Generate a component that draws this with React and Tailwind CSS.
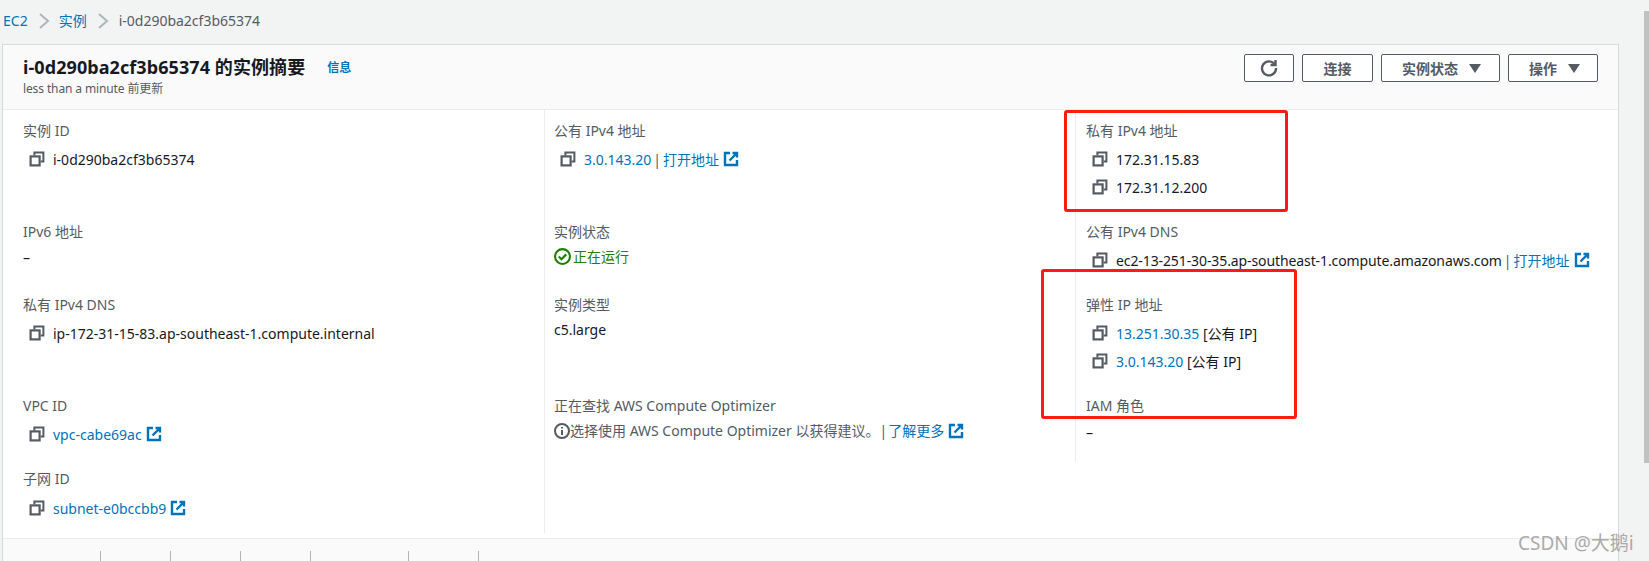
import React from "react";

const FONT = { fontFamily: '"Noto Sans", "Noto Sans CJK SC", sans-serif' };

// AWS style icons
function CopyIcon() {
  return (
    <svg width="16" height="16" viewBox="0 0 16 16" fill="none" stroke="#545b64" strokeWidth="2.2" className="shrink-0">
      <rect x="1.6" y="5.4" width="9" height="9" />
      <path d="M5.4 4.4V1.6h9v9h-2.8" strokeWidth="2" />
    </svg>
  );
}

function ExternalIcon() {
  return (
    <svg width="16" height="16" viewBox="0 0 16 16" fill="none" stroke="#0073bb" strokeWidth="2.4" className="shrink-0">
      <path d="M7 2H2v12h12V9" />
      <path d="M6.5 9.5L14 2M9.5 2h4.5v4.5" />
    </svg>
  );
}

function Chevron({ className }) {
  return (
    <svg width="14" height="18" viewBox="0 0 14 18" fill="none" stroke="#aab7b8" strokeWidth="2" className={className}>
      <path d="M3 2l8 7-8 7" />
    </svg>
  );
}

function Divider() {
  return <span className="text-[#545b64]">|</span>;
}

function Label({ children }) {
  return <div className="text-[#545b64] leading-5">{children}</div>;
}

function CopyRow({ children }) {
  return (
    <div className="flex items-center h-[28px] pl-[6px] gap-[8px] text-[#16191f]">
      <CopyIcon />
      <div className="flex items-center whitespace-nowrap">{children}</div>
    </div>
  );
}

function A({ children }) {
  return <span className="text-[#0073bb]">{children}</span>;
}

function HeadButton({ className, children }) {
  return (
    <div className={`h-[28px] flex items-center justify-center border border-[#545b64] rounded-[2px] bg-white text-[#545b64] font-bold text-[14px] ${className}`}>
      {children}
    </div>
  );
}

function Caret() {
  return <span className="w-0 h-0 border-x-[6px] border-x-transparent border-t-[9px] border-t-[#545b64]" />;
}

export default function App() {
  return (
    <div style={FONT} className="relative w-[1649px] h-[561px] overflow-hidden bg-[#f2f3f3] text-[14px]">
      {/* breadcrumb */}
      <div className="h-[44px] flex items-center pl-[3px] pb-[3px] text-[#545b64]">
        <span className="text-[#0073bb]">EC2</span>
        <Chevron className="ml-[9px] mr-[8px]" />
        <span className="text-[#0073bb]">实例</span>
        <Chevron className="ml-[9px] mr-[9px]" />
        <span>i-0d290ba2cf3b65374</span>
      </div>

      {/* card */}
      <div className="ml-[2px] w-[1617px] h-[517px] bg-white border-x border-t border-[#d5dbdb] flex flex-col">
        <div className="h-[65px] shrink-0 bg-[#fafafa] border-b border-[#eaeded] flex justify-between pl-[20px] pr-[20px] pt-[9px]">
          <div>
            <div className="flex items-center h-[27px]">
              <span className="font-bold text-[18px] tracking-[0.08px] text-[#16191f]">i-0d290ba2cf3b65374 的实例摘要</span>
              <span className="ml-[22px] font-bold text-[12px] text-[#0073bb]">信息</span>
            </div>
            <div className="text-[12px] tracking-[-0.12px] text-[#545b64] leading-[16px]">less than a minute 前更新</div>
          </div>
          <div className="flex gap-[8px]">
            <HeadButton className="w-[50px]">
              <svg width="18" height="18" viewBox="0 0 18 18" fill="none" stroke="#545b64" strokeWidth="2.4">
                <path d="M14.5 5A7 7 0 1 0 16 9" />
                <path d="M15.5 1v5h-5" />
              </svg>
            </HeadButton>
            <HeadButton className="w-[71px]">连接</HeadButton>
            <HeadButton className="w-[119px] gap-[11px] pl-[2px]">实例状态<Caret /></HeadButton>
            <HeadButton className="w-[90px] gap-[11px] pl-[3px]">操作<Caret /></HeadButton>
          </div>
        </div>

        <div className="flex flex-1 min-h-0">
          {/* column 1 */}
          <div className="w-[541px] pl-[20px] pt-[11px] pb-[10px] shrink-0">
            <div className="h-[101px]">
              <Label>实例 ID</Label>
              <div className="mt-[4px]"><CopyRow>i-0d290ba2cf3b65374</CopyRow></div>
            </div>
            <div className="h-[73px]">
              <Label>IPv6 地址</Label>
              <div className="mt-[5px] text-[#16191f]">–</div>
            </div>
            <div className="h-[101px]">
              <Label>私有 IPv4 DNS</Label>
              <div className="mt-[4px]"><CopyRow>ip-172-31-15-83.ap-southeast-1.compute.internal</CopyRow></div>
            </div>
            <div className="h-[73px]">
              <Label>VPC ID</Label>
              <div className="mt-[4px]"><CopyRow><A>vpc-cabe69ac</A><span className="ml-[4px]"><ExternalIcon /></span></CopyRow></div>
            </div>
            <div>
              <Label>子网 ID</Label>
              <div className="mt-[5px]"><CopyRow><A>subnet-e0bccbb9</A><span className="ml-[4px]"><ExternalIcon /></span></CopyRow></div>
            </div>
          </div>

          {/* column 2 */}
          <div className="w-[531px] shrink-0 self-start h-[423px] border-l border-[#eaeded] pl-[9px] pt-[11px]">
            <div className="h-[101px]">
              <Label>公有 IPv4 地址</Label>
              <div className="mt-[4px]"><CopyRow><A>3.0.143.20</A><span className="mx-[2px]"><Divider /></span><A>打开地址</A><span className="ml-[4px]"><ExternalIcon /></span></CopyRow></div>
            </div>
            <div className="h-[73px]">
              <Label>实例状态</Label>
              <div className="mt-[4px] flex items-center gap-[2px] text-[#1d8102]">
                <svg width="17" height="17" viewBox="0 0 16 16" fill="none" stroke="#1d8102" strokeWidth="2"><circle cx="8" cy="8" r="7" /><path d="M4.5 8l2.5 2.5 4.5-4.5" /></svg>
                正在运行
              </div>
            </div>
            <div className="h-[101px]">
              <Label>实例类型</Label>
              <div className="mt-[4px] text-[#16191f]">c5.large</div>
            </div>
            <div>
              <Label>正在查找 AWS Compute Optimizer</Label>
              <div className="mt-[4px] flex items-center text-[#545b64] whitespace-nowrap">
                <svg width="16" height="16" viewBox="0 0 16 16" fill="none" stroke="#545b64" strokeWidth="2"><circle cx="8" cy="8" r="7" /><path d="M8 7v5M8 4v1.5" /></svg>
                选择使用 AWS Compute Optimizer 以获得建议。
                <span className="mr-[1px]"><Divider /></span>
                <A>了解更多</A>
                <span className="ml-[4px]"><ExternalIcon /></span>
              </div>
            </div>
          </div>

          {/* column 3 */}
          <div className="flex-1 self-start h-[352px] border-l border-[#eaeded] pl-[10px] pt-[11px]">
            <div className="h-[101px]">
              <Label>私有 IPv4 地址</Label>
              <div className="mt-[4px]">
                <CopyRow>172.31.15.83</CopyRow>
                <CopyRow>172.31.12.200</CopyRow>
              </div>
            </div>
            <div className="h-[73px]">
              <Label>公有 IPv4 DNS</Label>
              <div className="mt-[4px]"><CopyRow><span className="tracking-[-0.1px]">ec2-13-251-30-35.ap-southeast-1.compute.amazonaws.com</span><span className="mx-[2px]"><Divider /></span><A>打开地址</A><span className="ml-[4px]"><ExternalIcon /></span></CopyRow></div>
            </div>
            <div className="h-[101px]">
              <Label>弹性 IP 地址</Label>
              <div className="mt-[4px]">
                <CopyRow><A>13.251.30.35</A>&nbsp;[公有 IP]</CopyRow>
                <CopyRow><A>3.0.143.20</A>&nbsp;[公有 IP]</CopyRow>
              </div>
            </div>
            <div>
              <Label>IAM 角色</Label>
              <div className="mt-[6px] text-[#16191f]">–</div>
            </div>
          </div>
        </div>

        {/* tab strip */}
        <div className="h-[23px] shrink-0 bg-[#fafafa] border-t border-[#eaeded] flex items-end">
          <div className="w-[98px] h-[10px] border-r border-[#aab7b8]" />
          <div className="w-[70px] h-[10px] border-r border-[#aab7b8]" />
          <div className="w-[70px] h-[10px] border-r border-[#aab7b8]" />
          <div className="w-[70px] h-[10px] border-r border-[#aab7b8]" />
          <div className="w-[98px] h-[10px] border-r border-[#aab7b8]" />
          <div className="w-[70px] h-[10px] border-r border-[#aab7b8]" />
        </div>
      </div>

      {/* scrollbar */}
      <div className="absolute right-0 top-[11px] w-[5px] h-[452px] bg-[#c1c1c1]" />

      {/* red annotations drawn over the screenshot */}
      <div className="absolute left-[1064px] top-[110px] w-[224px] h-[102px] border-[3px] border-[#ff1a12] rounded-[3px]" />
      <div className="absolute left-[1041px] top-[269px] w-[256px] h-[150px] border-[3px] border-[#ff1a12] rounded-[3px]" />

      {/* watermark */}
      <div className="absolute left-[1518px] top-[529px] text-[19px] text-[#8a8a8a] opacity-70 whitespace-nowrap">CSDN @大鹅i</div>
    </div>
  );
}
